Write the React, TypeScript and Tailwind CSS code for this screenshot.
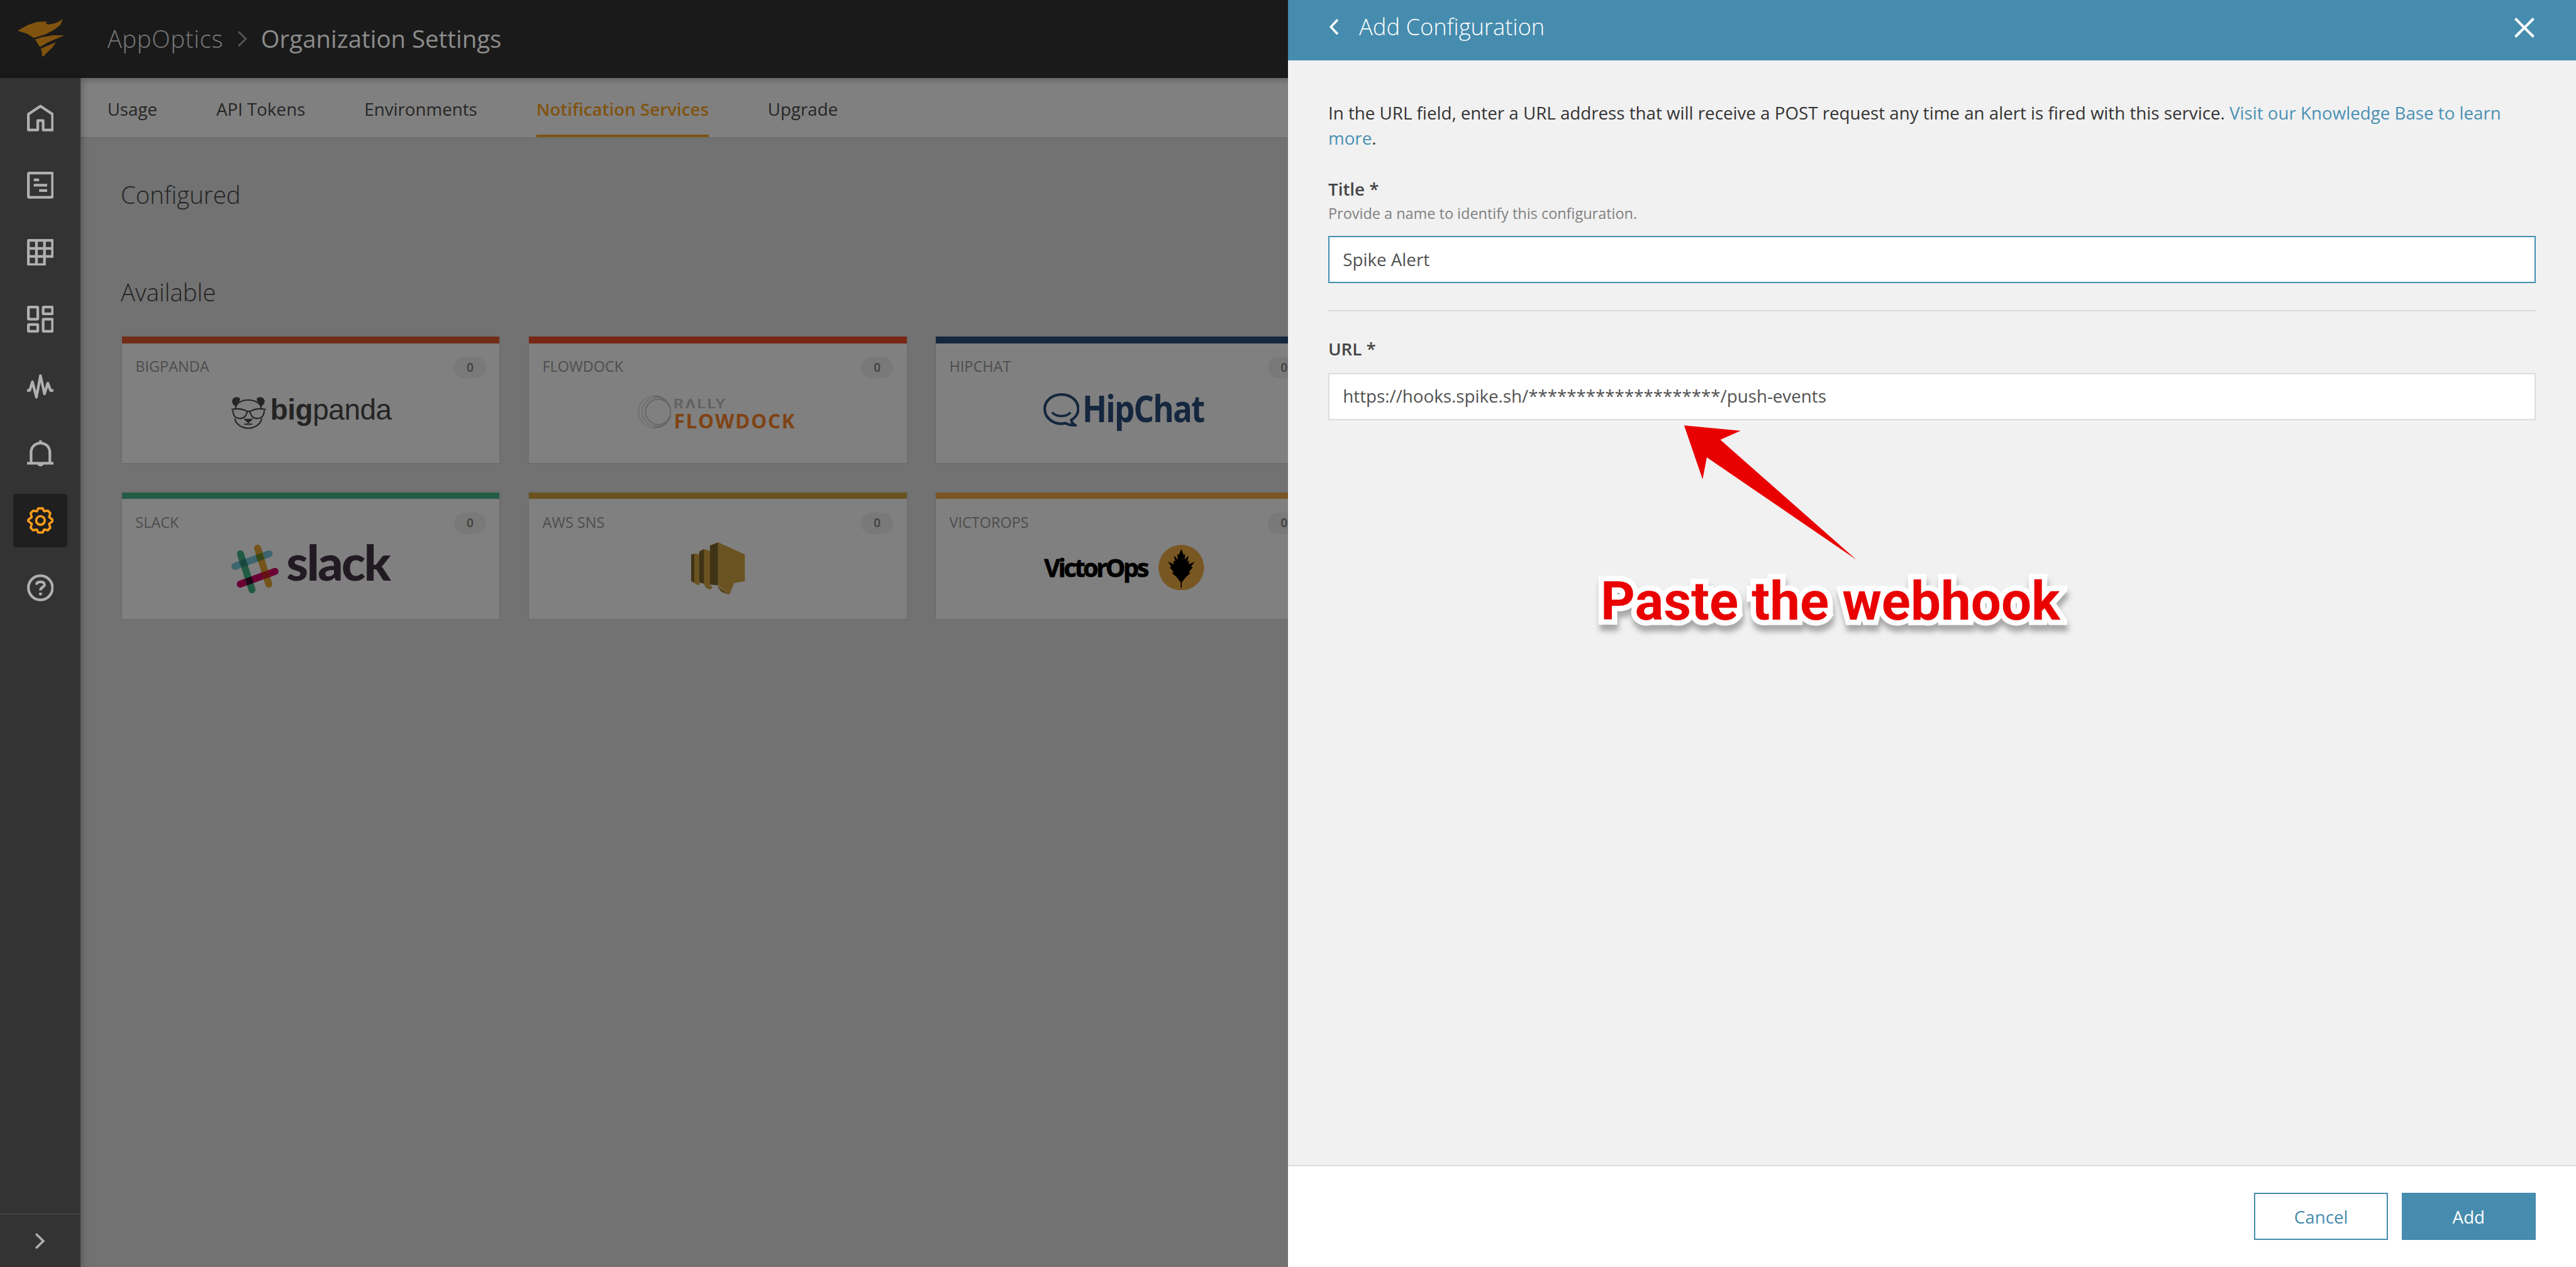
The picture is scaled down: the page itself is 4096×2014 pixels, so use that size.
import React from "react";

const GRAY = "#b0b0b0";

function Logo() {
  return (
    <svg viewBox="0 0 36 30" className="h-[30px] w-[36px]" fill="#80530f">
      <path d="M0 8.900L3.700 6.700L8.200 4.300L14.500 2.200L22 2L21 3.500L22.800 4.200L27.800 3.300L30.300 2.200L33.700 0L32 4.300L27.800 7.700L21.200 11.400L15.300 13.300L12 14.200L7 11Z" />
      <path d="M13 15.200L17.800 13.700L26.200 12.200L35 12.300L27.800 15.200L22 17.800L16.600 21Z" />
      <path d="M17.200 22.300L22 20.200L28.700 17.300L26.200 21L19.500 27.700L18.200 28L18 24.300Z" />
    </svg>
  );
}

const Svg = ({ children }: { children: React.ReactNode }) => (
  <svg viewBox="0 0 20 20" className="size-5" fill="none" stroke={GRAY} strokeWidth="2">{children}</svg>
);

const HomeIcon = () => (
  <Svg>
    <path d="M1 19V7.300L10 1.300L19 7.300V19H12V12H8V19Z" strokeLinejoin="round" />
  </Svg>
);
const ListIcon = () => (
  <Svg>
    <rect x="1" y="1" width="18" height="18" rx=".6" />
    <path d="M5 6H9M5 10H15M9 14H15" />
  </Svg>
);
const GridIcon = () => (
  <Svg>
    <path d="M1 1H19V13H13V19H1ZM1 7H19M1 13H13M7 1V19M13 1V13" strokeLinejoin="round" />
  </Svg>
);
const DashboardIcon = () => (
  <Svg>
    <rect x="1" y="1" width="7" height="9" rx=".4" />
    <rect x="12" y="1" width="7" height="5" rx=".4" />
    <rect x="1" y="14" width="7" height="5" rx=".4" />
    <rect x="12" y="10" width="7" height="9" rx=".4" />
  </Svg>
);
const WaveIcon = () => (
  <Svg>
    <path d="M0 13H2L4 6.500L7 18L10 2L13 15.500L15.500 7.500L17.500 13H20" strokeLinejoin="round" />
  </Svg>
);
const BellIcon = () => (
  <Svg>
    <path d="M3 17V9C3 5 6 2 10 2S17 5 17 9V17M0 17H20" />
    <path d="M7.500 17.500A2.600 2.600 0 0 0 12.500 17.500Z" fill={GRAY} stroke="none" />
    <path d="M9 0H11V2H9Z" fill={GRAY} stroke="none" />
  </Svg>
);
const GearIcon = () => (
  <svg viewBox="0 0 20 20" className="size-5" fill="none" stroke="#f99d1c" strokeWidth="1.700" strokeLinejoin="round">
    <path d="M8.300 1H11.700L12.700 3.200L15.500 2.700L17.300 4.500L16.500 7.500L19.100 9.500V10.500L16.500 12.500L17.300 15.500L15.500 17.300L12.700 16.800L11.700 19H8.300L7.300 16.800L4.500 17.300L2.700 15.500L3.500 12.500L.9 10.500V9.500L3.500 7.500L2.700 4.500L4.500 2.700L7.300 3.200Z" />
    <circle cx="10" cy="10" r="3.200" />
  </svg>
);
const HelpIcon = () => (
  <Svg>
    <circle cx="10" cy="10" r="9" />
    <path d="M7 7.700C7.200 5.900 8.500 5.600 10 5.600C11.800 5.600 13 6.200 13 7.700C13 9.600 10 9.500 10 12M10 13.600V15.600" />
  </Svg>
);

const navItems = [
  { name: "Home", Icon: HomeIcon },
  { name: "Events", Icon: ListIcon },
  { name: "Infrastructure", Icon: GridIcon },
  { name: "Dashboards", Icon: DashboardIcon },
  { name: "Metrics", Icon: WaveIcon },
  { name: "Alerts", Icon: BellIcon },
  { name: "Settings", Icon: GearIcon, active: true },
  { name: "Help", Icon: HelpIcon },
];

function BigPandaLogo() {
  return (
    <div className="flex h-[30px] items-start text-[#242424]">
      <svg viewBox="0 0 27 24" className="mt-px h-[24px] w-[27px]" fill="none" stroke="currentColor" strokeWidth="1">
        <path d="M3.700 8V7C1.500 6 .6 4 1.100 2.300C1.700.3 4 -.4 5.800.4C7 1 7.200 2 6.500 3C5.300 4.200 5 5 5 6Z" fill="currentColor" stroke="none" />
        <path d="M22.500 8V7C24.700 6 25.600 4 25.100 2.300C24.500.3 22.200 -.4 20.400.4C19.200 1 19 2 19.700 3C20.900 4.200 21.200 5 21.200 6Z" fill="currentColor" stroke="none" />
        <path d="M3.700 9V6.500C8 .8 18 .8 22.500 6.500V9M3 16C3.500 20 8 23.300 13 23.300S22.500 20 23 16" />
        <path d="M.5 9.400C4 8.600 8.500 8.700 12 10.700H14.500C18 8.700 22.500 8.600 26.100 9.400M1.500 10C2 14 3 16 7 16C10.500 16 11.500 13.500 12.300 11M25 10C24.500 14 23.500 16 19.500 16C16 16 15 13.500 14.200 11M10 20.300H16" />
        <path d="M10.700 16.800H15.500L13 19Z" fill="currentColor" />
      </svg>
      <div className="ml-[2.500px] -mt-[2.500px] whitespace-nowrap font-['Liberation_Sans'] text-[21.500px] leading-[26px] tracking-[-0.200px]">
        <b>big</b>panda
      </div>
    </div>
  );
}

function SlackLogo() {
  return (
    <div className="flex h-[40px] items-start">
      <svg viewBox="0 0 36 37" className="h-[37px] w-[36px]" strokeWidth="5.200" strokeLinecap="round" fill="none">
        <path d="M3 16.500L28.500 7.200" stroke="#3c656f" />
        <path d="M7 29.800L33 20.300" stroke="#6b0035" />
        <path d="M7.200 7.200L15.800 34" stroke="#225b44" />
        <path d="M20 3L28.300 29.800" stroke="#74541a" />
        <path d="M7.200 15L11.800 13.300" stroke="#1a4840" strokeLinecap="butt" />
        <path d="M19.300 10.500L24.200 8.800" stroke="#3a471a" strokeLinecap="butt" />
        <path d="M11.400 28.200L16.200 26.500" stroke="#1d0718" strokeLinecap="butt" />
        <path d="M23.700 23.700L28.400 22" stroke="#660f16" strokeLinecap="butt" />
      </svg>
      <div className="ml-[5.500px] -mt-[7px] font-['Lato'] text-[37px] font-black leading-[40px] tracking-[-1.200px] text-[#221a22]">slack</div>
    </div>
  );
}

function FlowdockLogo() {
  return (
    <div className="flex items-start">
      <svg viewBox="0 0 25 26" className="h-[26px] w-[25px]" fill="none" stroke="#656869">
        <circle cx="12.700" cy="13" r="12" strokeWidth=".9" strokeOpacity=".6" />
        <circle cx="13.900" cy="13" r="10.700" strokeWidth=".9" strokeOpacity=".7" />
        <circle cx="15.200" cy="13" r="9.400" strokeWidth=".9" />
        <path d="M12 1.300C20 1 25 8 24.600 14C24.200 20 19 25 12 24.700" strokeWidth="1.200" />
      </svg>
      <div className="ml-[2px] flex flex-col whitespace-nowrap">
        <div className="mt-[1.500px] origin-left scale-x-[1.200] font-['Roboto'] text-[9.700px] font-bold leading-[12px] tracking-[1.100px] text-[#5f6162]">RΛLLY</div>
        <div className="-mt-[1.500px] font-['Open_Sans'] text-[14.800px] font-bold leading-[15px] tracking-[0.800px] text-[#7f4315]">FLOWDOCK</div>
      </div>
    </div>
  );
}

function SnsLogo() {
  return (
    <svg viewBox="0 0 40 39" className="h-[39px] w-[40px]" fill="#6a5320">
      <path d="M0 9.200L3 8.300L6 9.200V30.500L6.500 31.300L5 32L2.500 30.500L0 29Z" />
      <path d="M0 9.200L2.300 8.800V29.800L0 29Z" fill="#403215" />
      <path d="M6 7L9.500 5L14 6.500V32L16 33.500L14.500 35L11.500 34.300L9 30.500L6 30Z" />
      <path d="M6 7L9.500 5V30.800L6 30Z" fill="#403215" />
      <path d="M19 32L28.500 39L22.500 37Z" fill="#56431a" />
      <path d="M20 0L40 9V29L32 30.300L28.500 39L20 32Z" />
      <path d="M14 2.500L20 0V32L14 31.500Z" fill="#403215" />
    </svg>
  );
}

function HipChatLogo() {
  return (
    <div className="flex items-start text-[#15273f]">
      <svg viewBox="0 0 27 25" className="h-[25px] w-[27px]" fill="none" stroke="currentColor" strokeWidth="2" strokeLinejoin="round">
        <path d="M16.500 22.300C8 24.300 1 18.500 1 11.700C1 5.500 6.500 1 13.500 1S26 5.500 26 11.700C26 15.500 23.500 18.500 20.800 20C21 21.800 22.500 23.200 24 24C21 24 18.500 23.600 16.500 22.300Z" />
        <path d="M6.500 14.300C10 18 17 18 20.300 14.300" strokeWidth="1.700" />
      </svg>
      <div className="ml-[2px] -mt-[7px] origin-left scale-x-[.855] font-['Open_Sans'] text-[28px] font-bold leading-[36px] tracking-[-1px]">HipChat</div>
    </div>
  );
}

function VictorOpsLogo() {
  return (
    <div className="flex items-center">
      <div className="ml-[0.700px] w-[76.300px] whitespace-nowrap font-['Open_Sans'] text-[18.500px] font-bold leading-[24px] tracking-[-1.550px] text-black [-webkit-text-stroke:.4px_black]">VictorOps</div>
      <svg viewBox="0 0 34 34" className="ml-[9px] size-[34px]">
        <circle cx="17" cy="17" r="17" fill="#795722" />
        <path d="M17 3L18.800 7.500L20 7L19.500 11L22.500 8L21.500 12.500L23 11.800L22.500 14.500L27 12.500L24.500 16L25.500 17L22.500 20.500L24 21L20.500 24L17.400 28V32H16.600V28L13.500 24L10 21L11.500 20.500L8.500 17L9.500 16L7 12.500L11.500 14.500L11 11.800L12.500 12.500L11.500 8L14.500 11L14 7L15.200 7.500Z" fill="#000" />
      </svg>
    </div>
  );
}

const services = [
  { name: "BIGPANDA", bar: "bg-[#712d17]", pad: "pl-[81px] pt-[39px]", Logo: BigPandaLogo },
  { name: "FLOWDOCK", bar: "bg-[#782616]", pad: "pl-[81px] pt-[38px]", Logo: FlowdockLogo },
  { name: "HIPCHAT", bar: "bg-[#15273f]", pad: "pl-[80px] pt-[37px]", Logo: HipChatLogo },
  { name: "SLACK", bar: "bg-[#255c46]", pad: "pl-[81px] pt-[33.500px]", Logo: SlackLogo },
  { name: "AWS SNS", bar: "bg-[#6a5320]", pad: "pl-[121px] pt-[32px]", Logo: SnsLogo },
  { name: "VICTOROPS", bar: "bg-[#7a5624]", pad: "pl-[80px] pt-[34px]", Logo: VictorOpsLogo },
];

const tabs = ["Usage", "API Tokens", "Environments", "Notification Services", "Upgrade"];

function Chevron({ className, flip, width }: { className: string; flip?: boolean; width: string }) {
  return (
    <svg viewBox="0 0 8 12" className={className} fill="none" stroke="currentColor" strokeWidth={width}>
      <path d={flip ? "M7 .6L2 6L7 11.400" : "M1 .6L6.500 6L1 11.400"} />
    </svg>
  );
}

export default function App() {
  return (
    <div className="h-[944px] w-[1920px] overflow-hidden bg-[#727272] font-['Open_Sans',sans-serif] text-[13px] [zoom:2.13333333]">
      <div className="flex h-full">
        <div className="flex w-[960px] shrink-0 flex-col overflow-hidden">
          <header className="relative z-10 flex h-[58px] shrink-0 items-center bg-[#1a1a1a]">
            <div className="w-[80px] shrink-0 pl-[13px]">
              <Logo />
            </div>
            <span className="whitespace-nowrap text-[18px] font-light tracking-[0.300px] text-[#7a7a7a]">AppOptics</span>
            <Chevron className="ml-[10.500px] h-[12px] w-[8px] text-[#555]" width="1.300" />
            <span className="ml-[9.500px] whitespace-nowrap text-[18px] text-[#8c8c8c]">Organization Settings</span>
          </header>
          <div className="flex min-h-0 flex-1">
            <nav className="relative z-10 flex w-[60px] shrink-0 flex-col items-center bg-[#333] pt-[10px] shadow-[0_0_6px_rgba(0,0,0,.35)]">
              <div className="flex flex-1 flex-col gap-[10px]">
                {navItems.map(({ name, Icon, active }) => (
                  <div key={name} className={active ? "flex size-10 items-center justify-center rounded-[2px] bg-[#1f1f1f]" : "flex size-10 items-center justify-center"}>
                    <Icon />
                  </div>
                ))}
              </div>
              <div className="flex h-[40px] w-full items-center justify-center border-t border-[#444] pt-px">
                <Chevron className="h-[12px] w-[8px] text-[#b0b0b0]" width="1.700" />
              </div>
            </nav>
            <main className="min-w-0 flex-1">
              <div className="flex h-[45px] gap-[44px] border-b border-[#6d6d6d] bg-[#808080] pl-[20px] text-[#262626] shadow-[inset_0_4px_4px_-2px_rgba(0,0,0,.2)]">
                {tabs.map((t) => (
                  <div key={t} className={t === "Notification Services" ? "h-[44px] whitespace-nowrap border-b-2 border-[#80530f] font-semibold leading-[46px] text-[#80530f]" : "h-[44px] whitespace-nowrap leading-[46px]"}>
                    {t}
                  </div>
                ))}
              </div>
              <div className="pl-[30px]">
                <h2 className="mt-[30px] text-[18px] font-light leading-[24px] text-[#222]">Configured</h2>
                <h2 className="mt-[49px] text-[18px] font-light leading-[24px] text-[#222]">Available</h2>
                <div className="mt-[20px] grid w-[890px] grid-cols-3 gap-5">
                  {services.map(({ name, bar, pad, Logo: Mark }) => (
                    <div key={name} className="relative h-[96px] border border-[#6d6d6d] bg-[#808080]">
                      <div className={`h-[5px] ${bar}`} />
                      <div className="absolute inset-x-0 top-[15px] flex h-[16px] items-center justify-between pl-[10px] pr-[10px]">
                        <span className="-mt-px text-[11px] leading-[14px] text-[#4d4d4d]">{name}</span>
                        <span className="flex h-[16px] w-[24px] items-center justify-center rounded-full bg-[#797979] text-[9px] font-semibold text-[#404040]">0</span>
                      </div>
                      <div className={pad}>
                        <Mark />
                      </div>
                    </div>
                  ))}
                </div>
              </div>
            </main>
          </div>
        </div>

        <aside className="relative z-20 flex w-[960px] shrink-0 flex-col bg-[#f1f1f1]">
          <div className="flex h-[45px] shrink-0 items-center bg-[#468cae] pb-[5px] pl-[30px] pr-[31px] text-white">
            <Chevron className="h-[12px] w-[8px]" flip width="1.700" />
            <span className="ml-[15px] text-[17px] font-light">Add Configuration</span>
            <svg viewBox="0 0 15 15" className="ml-auto mt-px size-[15px]" fill="none" stroke="currentColor" strokeWidth="1.900">
              <path d="M.7.7L14.300 14.300M14.300.7L.7 14.300" />
            </svg>
          </div>
          <div className="flex-1 px-[30px] pt-[29.500px]">
            <p className="leading-[19px] text-[#333]">
              In the URL field, enter a URL address that will receive a POST request any time an alert is fired with this service.{" "}
              <span className="text-[#4a90b4]">Visit our Knowledge Base to learn</span>{" "}
              <span className="text-[#4a90b4]">more</span>.
            </p>
            <div className="mt-[18.500px] font-semibold leading-[20px] text-[#444]">Title *</div>
            <div className="text-[11px] leading-[16px] text-[#808080]">Provide a name to identify this configuration.</div>
            <div className="mt-[9px] flex h-[35px] items-center border border-[#468cae] bg-white px-[10px] text-[#515151]">Spike Alert</div>
            <div className="mt-[20px] border-t border-[#dcdcdc]" />
            <div className="mt-[18px] font-semibold leading-[20px] text-[#444]">URL *</div>
            <div className="mt-[8px] flex h-[35px] items-center border border-[#dcdcdc] bg-white px-[10px] text-[#515151]">
              https://hooks.spike.sh/********************/push-events
            </div>
          </div>
          <div className="flex h-[76px] shrink-0 items-start justify-end gap-[10px] border-t border-[#dcdcdc] bg-white pr-[30px] pt-[20px]">
            <button className="h-[35px] w-[100px] border border-[#468cae] pt-px text-[#468cae]">Cancel</button>
            <button className="h-[35px] w-[100px] bg-[#468cae] pt-px text-white">Add</button>
          </div>

          <svg viewBox="0 0 130 102" className="absolute left-[295px] top-[317px] h-[102px] w-[130px]" fill="#e90000">
            <path d="M.4.1L42.500 4.100L27.400 10.800L128.800 100.200L17.300 23.900L14.200 40.300Z" />
          </svg>
          <div className="absolute left-[233px] top-[424px] whitespace-nowrap font-['Roboto'] text-[40px] font-bold leading-[48px] text-[#e90000] [-webkit-text-stroke:8px_white] [paint-order:stroke_fill] [filter:drop-shadow(1px_5px_2px_rgba(0,0,0,.3))]">
            Paste the webhook
          </div>
        </aside>
      </div>
    </div>
  );
}
